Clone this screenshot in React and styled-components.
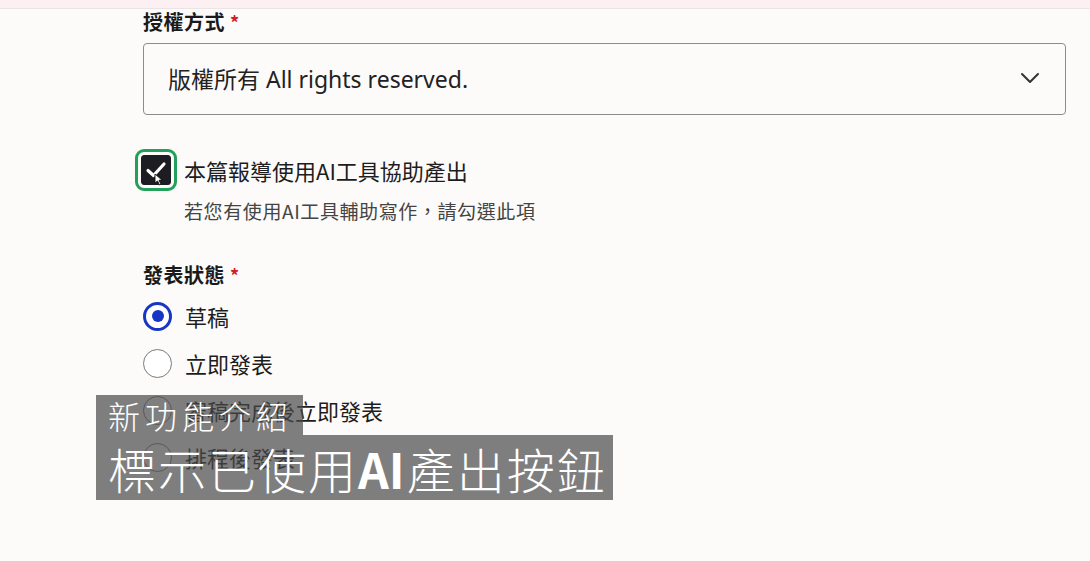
import React from "react";
import styled, { createGlobalStyle } from "styled-components";

const Global = createGlobalStyle`
  html, body { margin: 0; padding: 0; background: #fcfbfa; }
  body { font-family: "Noto Sans", "Noto Sans CJK TC", sans-serif; color: #1d1d1d; }
`;

const options = ["草稿", "立即發表", "審稿完成後立即發表", "排程後發表"];

export default function App() {
  const [aiUsed, setAiUsed] = React.useState(true);
  const [status, setStatus] = React.useState(0);
  return (
    <>
      <Global />
      <Page>
        <TopBar />
        <Form>
          <Label>授權方式<Star>*</Star></Label>
          <Select>
            <span>版權所有 All rights reserved.</span>
            <svg width="20" height="12" viewBox="0 0 20 12">
              <path d="M2 2 L10 10 L18 2" fill="none" stroke="#333" strokeWidth="2" strokeLinecap="round" strokeLinejoin="round" />
            </svg>
          </Select>

          <CheckRow onClick={() => setAiUsed(!aiUsed)}>
            <CheckBox checked={aiUsed}>
              {aiUsed && (
                <svg width="22" height="18" viewBox="0 0 22 18">
                  <path d="M3 9.5 L8.5 14.5 L19 3" fill="none" stroke="#fff" strokeWidth="3.2" strokeLinecap="round" strokeLinejoin="round" />
                </svg>
              )}
              <Cursor width="9" height="13" viewBox="0 0 9 13">
                <path d="M1 1 L1 10 L3.5 8 L5.5 12 L7 11.3 L5 7.3 L8 7 Z" fill="#fff" stroke="#111" strokeWidth="0.9" />
              </Cursor>
            </CheckBox>
            <CheckText>本篇報導使用AI工具協助產出</CheckText>
          </CheckRow>
          <Hint>若您有使用AI工具輔助寫作，請勾選此項</Hint>

          <Label top="39px">發表狀態<Star>*</Star></Label>
          <RadioList>
            {options.map((o, i) => (
              <RadioRow key={o} onClick={() => setStatus(i)}>
                <Radio selected={status === i} />
                <RadioText>{o}</RadioText>
              </RadioRow>
            ))}
          </RadioList>
        </Form>

        <Caption>
          <CaptionSmall>新功能介紹</CaptionSmall>
          <CaptionBig>標示已使用<Bold>AI</Bold>產出按鈕</CaptionBig>
        </Caption>
      </Page>
    </>
  );
}

const Page = styled.div`
  position: relative;
  width: 1090px;
  height: 561px;
  overflow: hidden;
  background: #fcfbfa;
`;

const TopBar = styled.div`
  height: 8px;
  background: #fdf0f2;
  border-bottom: 1px solid #ebe4e5;
`;

const Form = styled.div`
  display: flex;
  flex-direction: column;
  padding-left: 143px;
  width: 923px;
`;

const Label = styled.div`
  margin-top: ${(p) => p.top || "0px"};
  font-family: "Noto Sans CJK TC", sans-serif;
  font-size: 20px;
  font-weight: 700;
  line-height: 26px;
  letter-spacing: 0.5px;
  color: #1a1a1a;
`;

const Star = styled.span`
  color: #d0202a;
  margin-left: 5px;
  font-size: 18px;
`;

const Select = styled.div`
  margin-top: 8px;
  height: 72px;
  box-sizing: border-box;
  border: 1px solid #8c8c8c;
  border-radius: 4px;
  display: flex;
  align-items: center;
  justify-content: space-between;
  padding: 0 25px 3px 24px;
  font-size: 23px;
  color: #222;
  background: #fcfbfa;
`;

const CheckRow = styled.div`
  margin-top: 39px;
  display: flex;
  align-items: center;
  gap: 13px;
  cursor: pointer;
`;

const CheckBox = styled.div`
  position: relative;
  width: 30px;
  height: 30px;
  margin-left: -2px;
  box-sizing: border-box;
  border-radius: 3px;
  background: ${(p) => (p.checked ? "#1d1c22" : "#fff")};
  border: 1px solid #1d1c22;
  outline: 3px solid #22a05a;
  outline-offset: 3px;
  display: flex;
  align-items: center;
  justify-content: center;
`;

const Cursor = styled.svg`
  position: absolute;
  left: 12px;
  top: 17px;
`;

const CheckText = styled.span`
  font-family: "Noto Sans CJK TC", sans-serif;
  font-size: 22px;
  color: #1d1d1d;
`;

const Hint = styled.div`
  margin-top: 12px;
  padding-left: 41px;
  font-family: "Noto Sans CJK TC", sans-serif;
  font-size: 19px;
  letter-spacing: 0.6px;
  line-height: 25px;
  color: #444;
`;

const RadioList = styled.div`
  display: flex;
  flex-direction: column;
  gap: 17px;
  margin-top: 13px;
`;

const RadioRow = styled.div`
  display: flex;
  align-items: center;
  gap: 13px;
  height: 30px;
  cursor: pointer;
`;

const Radio = styled.span`
  width: 29px;
  height: 29px;
  box-sizing: border-box;
  border-radius: 50%;
  border: ${(p) => (p.selected ? "3.5px solid #1736c4" : "1.5px solid #7a7a7a")};
  background: #fff;
  display: flex;
  align-items: center;
  justify-content: center;
  &::after {
    content: "";
    width: 12px;
    height: 12px;
    border-radius: 50%;
    background: ${(p) => (p.selected ? "#1736c4" : "transparent")};
  }
`;

const RadioText = styled.span`
  font-family: "Noto Sans CJK TC", sans-serif;
  font-size: 22px;
  color: #1d1d1d;
`;

const Caption = styled.div`
  position: absolute;
  left: 96px;
  top: 395px;
  display: flex;
  flex-direction: column;
  align-items: flex-start;
`;

const CaptionSmall = styled.div`
  background: rgba(72, 72, 72, 0.7);
  height: 40px;
  padding: 0 10px 0 12px;
  display: flex;
  align-items: center;
  color: #fff;
  font-family: "Noto Sans CJK TC", sans-serif;
  font-weight: 300;
  font-size: 32px;
  letter-spacing: 5px;
`;

const CaptionBig = styled.div`
  background: rgba(72, 72, 72, 0.7);
  height: 65px;
  padding: 0 6px 0 12px;
  display: flex;
  align-items: center;
  color: #fff;
  font-family: "Noto Sans CJK TC", sans-serif;
  font-weight: 300;
  font-size: 48px;
  letter-spacing: 2px;
`;

const Bold = styled.span`
  font-weight: 700;
  letter-spacing: 0;
  margin-right: 2px;
`;
